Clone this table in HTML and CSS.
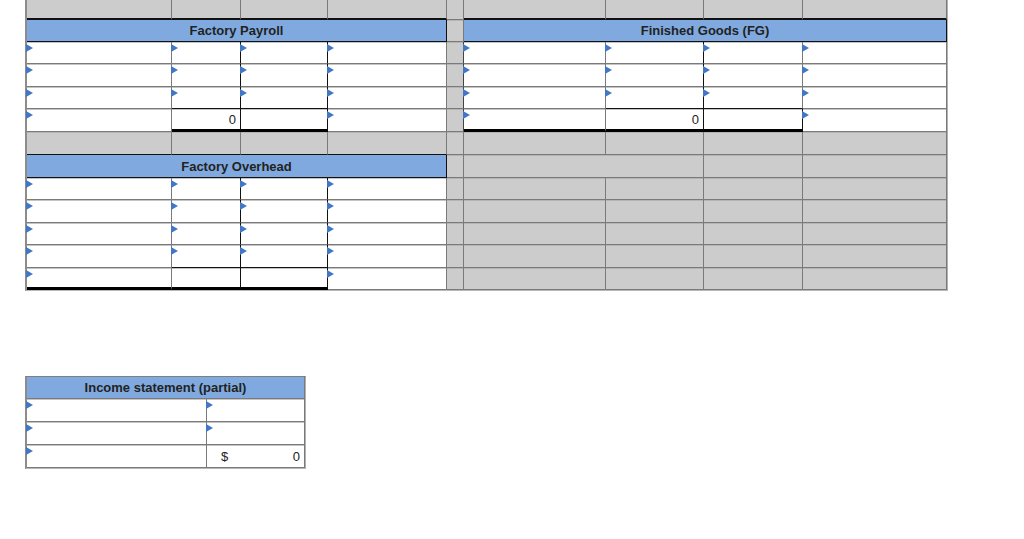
FILE: index.html
```html
<!DOCTYPE html>
<html>
<head>
<meta charset="utf-8">
<link rel="stylesheet" href="styles.css">
</head>
<body>
<div class="page">
  <div class="sheet">
    <!-- row 0 -->
    <div class="c gray bt"></div><div class="c gray bt"></div><div class="c gray bt"></div><div class="c gray bt"></div>
    <div class="c gray"></div>
    <div class="c gray bt"></div><div class="c gray bt"></div><div class="c gray bt"></div><div class="c gray bt"></div>
    <!-- row 1 -->
    <div class="c hdr span4">Factory Payroll</div>
    <div class="c gray"></div>
    <div class="c hdr span4">Finished Goods (FG)</div>
    <!-- row 2 -->
    <div class="c white in"></div><div class="c white in br-k"></div><div class="c white in br-k"></div><div class="c white in"></div>
    <div class="c gray sep"></div>
    <div class="c white in"></div><div class="c white in br-k"></div><div class="c white in"></div><div class="c white in"></div>
    <!-- row 3 -->
    <div class="c white in"></div><div class="c white in br-k"></div><div class="c white in br-k"></div><div class="c white in"></div>
    <div class="c gray sep"></div>
    <div class="c white in"></div><div class="c white in br-k"></div><div class="c white in"></div><div class="c white in"></div>
    <!-- row 4 -->
    <div class="c white in"></div><div class="c white in br-k bb-k"></div><div class="c white in br-k bb-k"></div><div class="c white in"></div>
    <div class="c gray sep"></div>
    <div class="c white in"></div><div class="c white in br-k bb-k"></div><div class="c white in bb-k"></div><div class="c white in"></div>
    <!-- row 5 -->
    <div class="c white in"></div><div class="c white num br-k bb-kk">0</div><div class="c white br-k bb-kk"></div><div class="c white in"></div>
    <div class="c gray sep"></div>
    <div class="c white in bb-kk"></div><div class="c white num br-k bb-kk">0</div><div class="c white br-k bb-kk"></div><div class="c white in"></div>
    <!-- row 6 -->
    <div class="c gray bb-k"></div><div class="c gray bb-k"></div><div class="c gray bb-k"></div><div class="c gray bb-k"></div>
    <div class="c gray"></div>
    <div class="c gray"></div><div class="c gray"></div><div class="c gray"></div><div class="c gray"></div>
    <!-- row 7 -->
    <div class="c hdr span4">Factory Overhead</div>
    <div class="c gray"></div>
    <div class="c gray span2"></div><div class="c gray"></div><div class="c gray"></div>
    <!-- row 8 -->
    <div class="c white in"></div><div class="c white in br-k"></div><div class="c white in br-k"></div><div class="c white in"></div>
    <div class="c gray"></div>
    <div class="c gray"></div><div class="c gray"></div><div class="c gray"></div><div class="c gray"></div>
    <!-- row 9 -->
    <div class="c white in"></div><div class="c white in br-k"></div><div class="c white in br-k"></div><div class="c white in"></div>
    <div class="c gray"></div>
    <div class="c gray"></div><div class="c gray"></div><div class="c gray"></div><div class="c gray"></div>
    <!-- row 10 -->
    <div class="c white in"></div><div class="c white in br-k"></div><div class="c white in br-k"></div><div class="c white in"></div>
    <div class="c gray"></div>
    <div class="c gray"></div><div class="c gray"></div><div class="c gray"></div><div class="c gray"></div>
    <!-- row 11 -->
    <div class="c white in"></div><div class="c white in br-k bb-k"></div><div class="c white in br-k bb-k"></div><div class="c white in"></div>
    <div class="c gray"></div>
    <div class="c gray"></div><div class="c gray"></div><div class="c gray"></div><div class="c gray"></div>
    <!-- row 12 -->
    <div class="c white in bb-kk"></div><div class="c white br-k bb-kk"></div><div class="c white br-k bb-kk"></div><div class="c white in"></div>
    <div class="c gray"></div>
    <div class="c gray"></div><div class="c gray"></div><div class="c gray"></div><div class="c gray"></div>
  </div>

  <div class="income">
    <div class="c ihdr span2">Income statement (partial)</div>
    <div class="c white in"></div><div class="c white in"></div>
    <div class="c white in"></div><div class="c white in"></div>
    <div class="c white in"></div><div class="c white money"><span>$</span><span>0</span></div>
  </div>
</div>
</body>
</html>
```

FILE: styles.css
```css
html, body {
  margin: 0;
  padding: 0;
  background: #ffffff;
}

body {
  font-family: "Liberation Sans", Arial, sans-serif;
  color: #222222;
}

.page {
  padding-left: 25px;
}

.sheet {
  display: grid;
  grid-template-columns: 145px 69px 87px 119px 17px 142px 98px 99px 144px;
  grid-template-rows: 23px 22px 22px 23px 22px 23px 23px 23px 22px 23px 22px 23px 22px;
  width: max-content;
  margin-top: -3px;
  border-left: 2px solid #8c8c8c;
  border-right: 1px solid #b0b0b0;
  border-bottom: 1px solid #b8b8b8;
}

.c {
  box-sizing: border-box;
  position: relative;
  border-right: 1px solid #7a7a7a;
  border-bottom: 1px solid #7a7a7a;
  display: flex;
  align-items: center;
  font-size: 13px;
}

.gray {
  background: #cccccc;
  box-shadow: inset 0 1px 0 #b4b4b4;
}

.white {
  background: #ffffff;
  box-shadow: inset 0 1px 0 #c4c4c4;
}

.span4 {
  grid-column: span 4;
}

.span2 {
  grid-column: span 2;
}

.bt {
  border-bottom: 2px solid #111111;
}

.hdr {
  background: #80aadf;
  justify-content: center;
  font-weight: bold;
  font-size: 13px;
  border-right: 1px solid #111111;
  border-bottom: 1px solid #111111;
}

.br-k {
  border-right-color: #111111;
}

.bb-k {
  border-bottom-color: #111111;
}

.bb-kk {
  border-bottom: 3px solid #000000;
}

.sep {
  border-right-color: #444444;
}

.num {
  justify-content: flex-end;
  padding-right: 4px;
}

.in::before {
  content: "";
  position: absolute;
  left: -1px;
  top: 2px;
  width: 0;
  height: 0;
  border-left: 7px solid #4177c4;
  border-top: 4px solid transparent;
  border-bottom: 4px solid transparent;
}

.income {
  display: grid;
  grid-template-columns: 180px 98px;
  grid-template-rows: 22px 23px 23px 23px;
  width: max-content;
  margin-top: 85px;
  border-left: 2px solid #8c8c8c;
  border-top: 1px solid #7f7f7f;
  border-right: 1px solid #b0b0b0;
  border-bottom: 1px solid #b8b8b8;
}

.ihdr {
  background: #80aadf;
  justify-content: center;
  font-weight: bold;
  font-size: 13px;
}

.money {
  justify-content: space-between;
  padding: 0 4px 0 14px;
}
```
